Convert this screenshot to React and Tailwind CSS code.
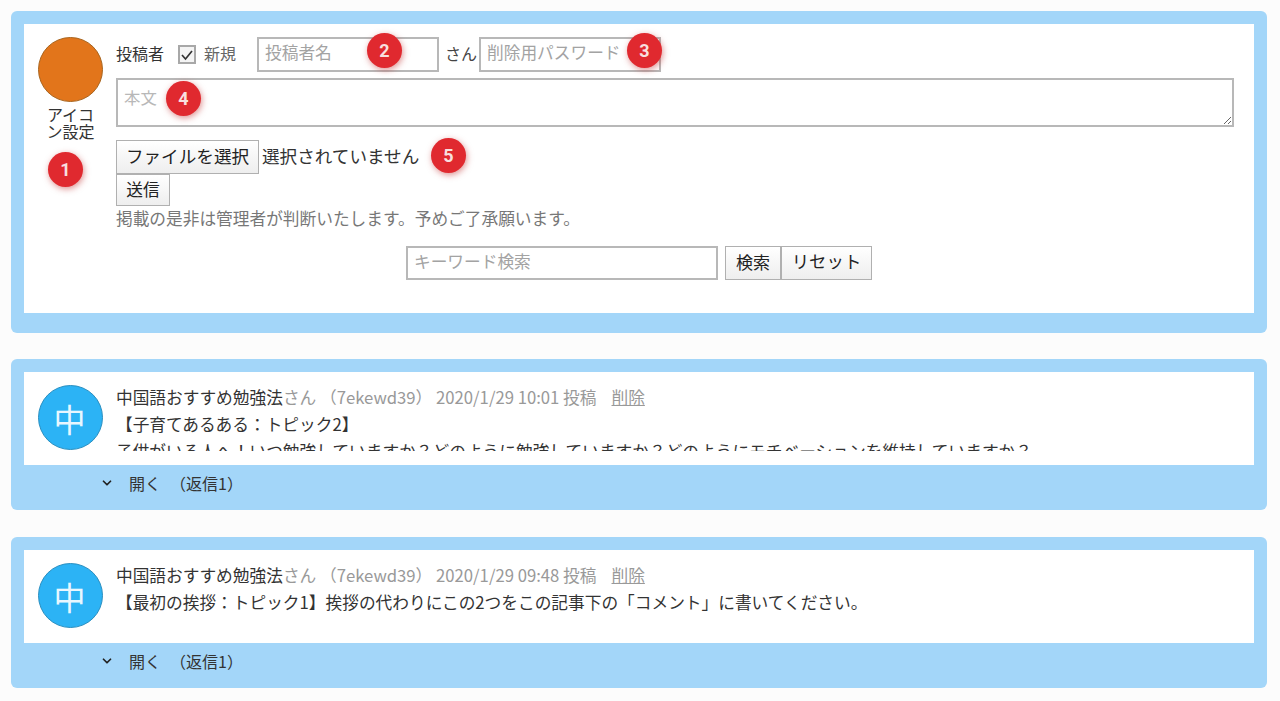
import React from "react";
import { ChevronDown } from "lucide-react";

const fontStack = { fontFamily: '"Noto Sans CJK JP", sans-serif' };

// Red numbered markers drawn over the screenshot
const markers = [
  { n: 1, className: "left-[48px] top-[152px]" },
  { n: 2, className: "left-[367px] top-[33px]" },
  { n: 3, className: "left-[627px] top-[33px]" },
  { n: 4, className: "left-[166px] top-[81px]" },
  { n: 5, className: "left-[431px] top-[138px]" },
];

const posts = [
  {
    id: "7ekewd39",
    date: "2020/1/29 10:01",
    lines: [
      "【子育てあるある：トピック2】",
      "子供がいる人へ！いつ勉強していますか？どのように勉強していますか？どのようにモチベーションを維持していますか？",
    ],
  },
  {
    id: "7ekewd39",
    date: "2020/1/29 09:48",
    lines: ["【最初の挨拶：トピック1】挨拶の代わりにこの2つをこの記事下の「コメント」に書いてください。"],
  },
];

const Marker = ({ n, className }) => (
  <div
    className={`absolute ${className} flex h-[35px] w-[35px] items-center justify-center rounded-full bg-[#e0292f] text-[18px] font-bold text-[#f8dfdf] shadow-[1px_2px_6px_rgba(190,40,40,0.5)]`}
    style={{ fontFamily: "Roboto, sans-serif" }}
  >
    {n}
  </div>
);

const TextInput = ({ placeholder, className }) => (
  <input
    type="text"
    placeholder={placeholder}
    className={`border-2 border-[#b8b8b8] bg-white pl-[6px] pr-[6px] text-[16.7px] outline-none placeholder:text-[#a3a3a3] ${className}`}
  />
);

const GrayButton = ({ children, className }) => (
  <button className={`border border-[#b0b0b0] bg-gradient-to-b from-white to-[#eeeeee] text-[#222] ${className}`}>
    {children}
  </button>
);

const PostForm = () => (
  <section className="mb-[-1px] h-[322px] rounded-[6px] bg-[#a3d6f9] p-[13px] pb-[19px]">
    <div className="flex h-[289px] bg-white pl-[14px] pt-[13px]">
      <div className="w-[78px] shrink-0">
        <div className="h-[65px] w-[65px] rounded-full border border-[#a8651f] bg-[#e2751b]"></div>
        <p className="mt-[4px] w-[65px] px-[8px] text-center text-[16px] leading-[17px] text-[#333]">
          アイコン設定
        </p>
      </div>

      <div className="w-[1118px]">
        <div className="flex h-[35px] items-center text-[16px] text-[#333]">
          <span className="mb-[3px]">投稿者</span>
          <span className="ml-[14px] flex h-[19px] w-[18px] items-center justify-center border-2 border-[#a8a8a8] bg-[#f4f4f4]">
            <svg viewBox="0 0 14 14" className="h-[14px] w-[14px]">
              <path d="M2 7l3.5 4L12 3" fill="none" stroke="#333" strokeWidth="1.7" />
            </svg>
          </span>
          <span className="mb-[3px] ml-[8px] text-[#666]">新規</span>
          <TextInput placeholder="投稿者名" className="ml-[21px] h-[35px] w-[182px] pb-[6px]" />
          <span className="mb-[3px] ml-[6px] text-[#444]">さん</span>
          <TextInput placeholder="削除用パスワード" className="ml-[2px] h-[35px] w-[182px] pb-[6px]" />
        </div>

        <textarea
          placeholder="本文"
          className="mt-[6px] block h-[49px] w-full border-2 border-[#b8b8b8] bg-white px-[6px] pt-[7px] text-[16.4px] leading-[20px] outline-none placeholder:text-[#b8b8b8]"
        ></textarea>

        <div className="mt-[13px] flex items-center text-[17.6px]">
          <GrayButton className="h-[34px] w-[143px] pb-[2px]">ファイルを選択</GrayButton>
          <span className="mb-[2px] ml-[3px] text-[#333]">選択されていません</span>
        </div>
        <GrayButton className="block h-[32px] w-[54px] pb-[1px] text-[16.7px]">送信</GrayButton>
        <p className="mt-[1px] h-[26px] text-[16.7px] leading-[22px] text-[#777]">
          掲載の是非は管理者が判断いたします。予めご了承願います。
        </p>

        <div className="ml-[290px] mt-[13px] flex">
          <TextInput placeholder="キーワード検索" className="h-[34px] w-[312px] pb-[4px]" />
          <GrayButton className="ml-[7px] h-[34px] w-[56px] pb-[3px] text-[17px]">検索</GrayButton>
          <GrayButton className="h-[34px] w-[91px] pb-[3px] text-[17.4px]">リセット</GrayButton>
        </div>
      </div>
    </div>
  </section>
);

const Post = ({ post }) => (
  <section className="mt-[27px] h-[151px] rounded-[6px] bg-[#a3d6f9] p-[13px] pb-0">
    <div className="flex h-[93px] bg-white pl-[14px] pt-[13px]">
      <div className="flex h-[65px] w-[65px] shrink-0 items-center justify-center rounded-full border border-[#2b8fc0] bg-[#2cb3f5] pr-[2px] text-[32px] text-[#e8f7ff]">
        中
      </div>
      <div className="ml-[13px] h-[66px] overflow-hidden">
        <p className="h-[26px] text-[16.7px] leading-[24px] text-[#999]">
          <span className="text-[#333]">中国語おすすめ勉強法</span>さん （{post.id}） {post.date} 投稿
          <span className="ml-[15px] underline">削除</span>
        </p>
        {post.lines.map((line) => (
          <p key={line} className="whitespace-nowrap text-[16.7px] leading-[27px] text-[#333]">
            {line}
          </p>
        ))}
      </div>
    </div>
    <div className="flex h-[36px] items-center pl-[76px] text-[16px] text-[#333]">
      <ChevronDown size={14} strokeWidth={3} color="#222" />
      <span className="ml-[15px]">開く</span>
      <span className="ml-[9px]">（返信1）</span>
    </div>
  </section>
);

const App = () => {
  return (
    <div className="relative h-[701px] overflow-hidden bg-[#fcfcfc] pl-[11px] pr-[13px] pt-[11px]" style={fontStack}>
      <PostForm />
      {posts.map((post) => (
        <Post key={post.date} post={post} />
      ))}
      {markers.map((m) => (
        <Marker key={m.n} n={m.n} className={m.className} />
      ))}
    </div>
  );
};

export default App;
